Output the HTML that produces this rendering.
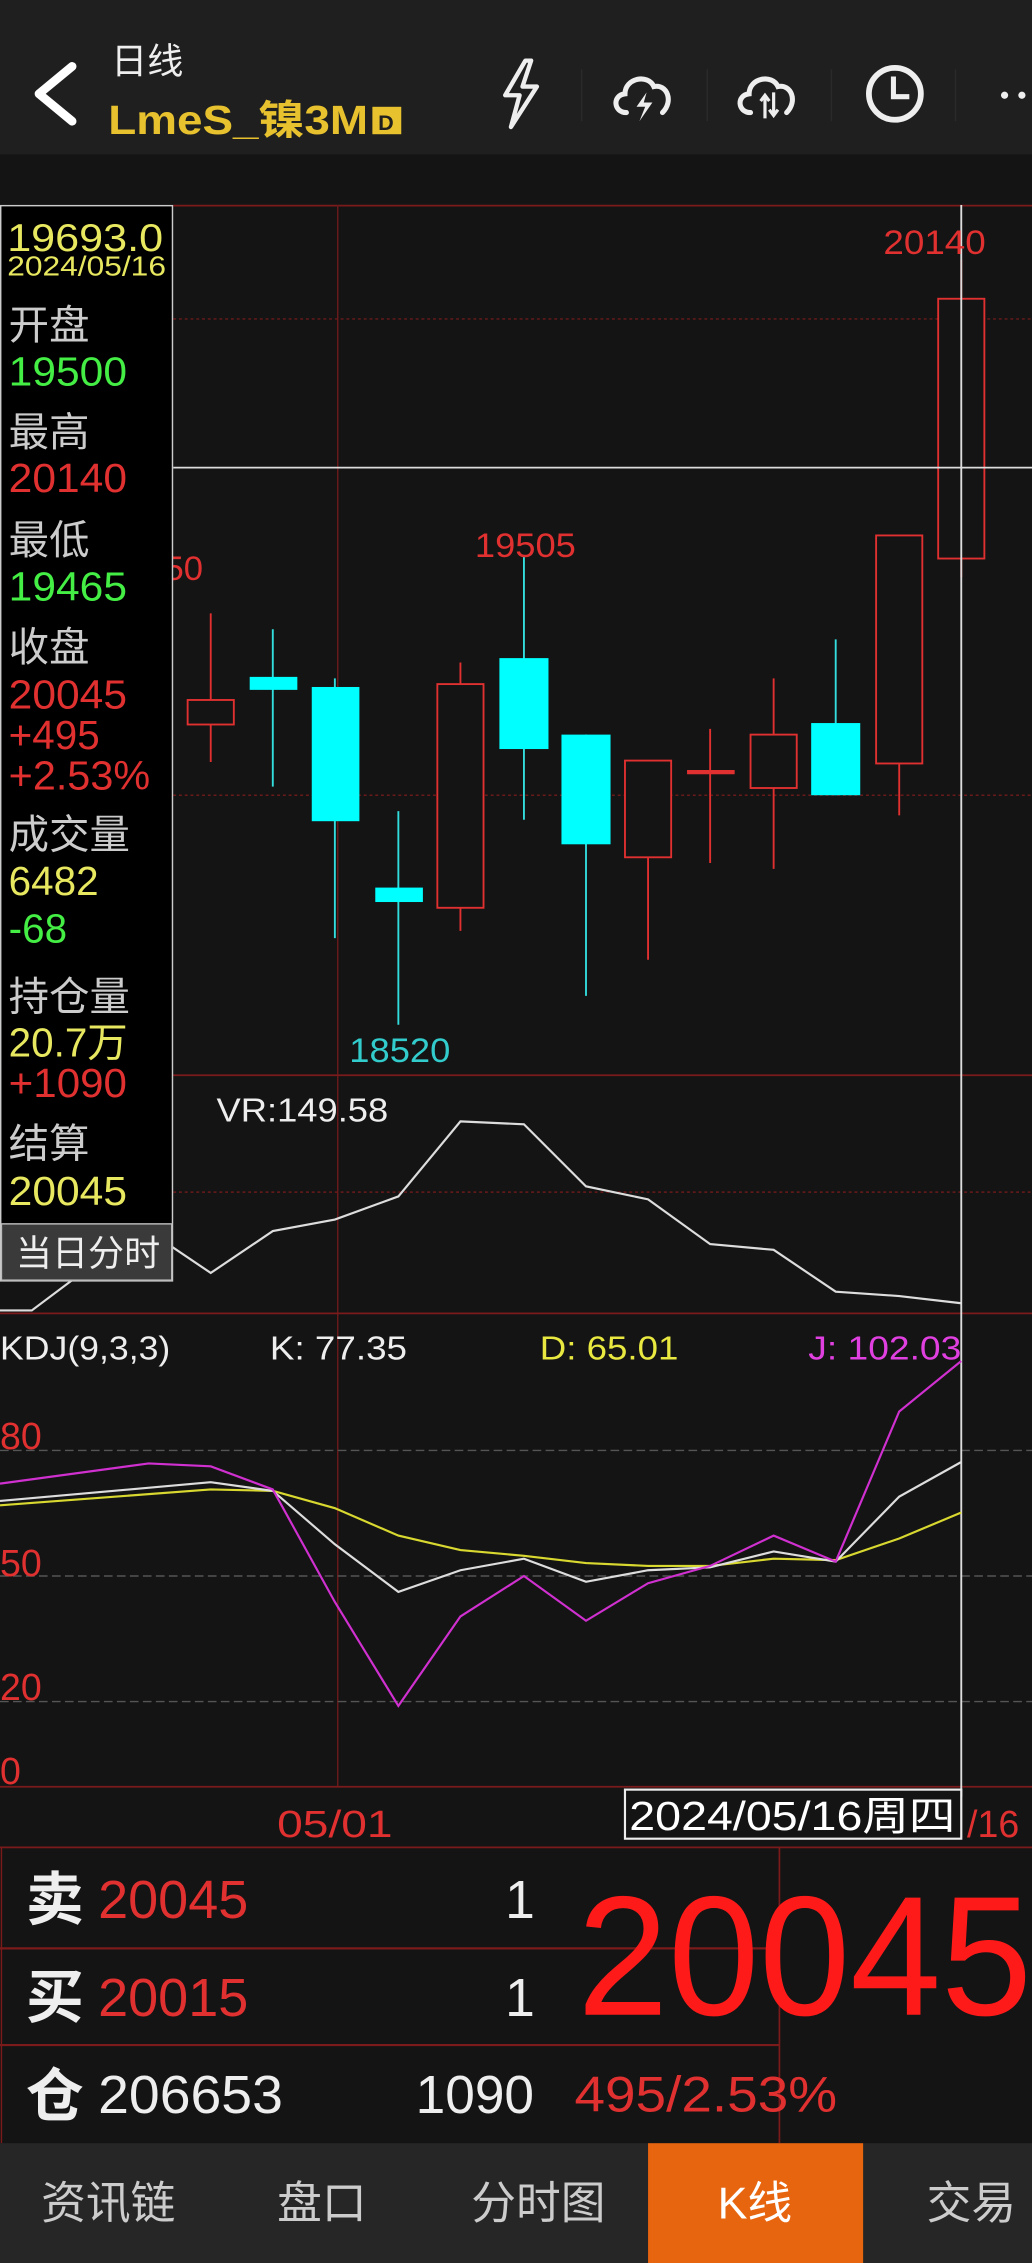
<!DOCTYPE html>
<html><head><meta charset="utf-8"><style>
html,body{margin:0;padding:0;background:#141414;width:1032px;height:2263px;overflow:hidden}
svg{display:block}
text{font-family:"Liberation Sans","Noto Sans CJK SC",sans-serif}
</style></head><body>
<svg width="1032" height="2263" viewBox="0 0 715 1568" preserveAspectRatio="none" xmlns="http://www.w3.org/2000/svg">
<rect x="0" y="0" width="715" height="1568" fill="#141414"/>
<!-- header -->
<rect x="0" y="0" width="715" height="107" fill="#1f1f1f"/>
<path d="M50 46 L27 65 L50 84" stroke="#fff" stroke-width="6" fill="none" stroke-linecap="round" stroke-linejoin="round"/>
<text x="77" y="51" font-size="25" fill="#eee">日线</text>
<text x="75" y="93" font-size="28" font-weight="bold" fill="#e8c22e" textLength="180" lengthAdjust="spacingAndGlyphs">LmeS_镍3M</text>
<rect x="258" y="74" width="20" height="19" fill="#e8c22e"/>
<text x="262" y="90" font-size="15" font-weight="bold" fill="#1f1f1f">D</text>
<path d="M364 42 L350 66 L360 66 L354 88 L372 60 L362 60 L368 42 Z" stroke="#eee" stroke-width="3" fill="none" stroke-linejoin="round"/>
<line x1="403" y1="48" x2="403" y2="84" stroke="#2a2a2a" stroke-width="1"/>
<line x1="490" y1="48" x2="490" y2="84" stroke="#2a2a2a" stroke-width="1"/>
<line x1="576" y1="48" x2="576" y2="84" stroke="#2a2a2a" stroke-width="1"/>
<line x1="662" y1="48" x2="662" y2="84" stroke="#2a2a2a" stroke-width="1"/>
<path d="M434 78 C425 78 424 66 433 65 C433 54 449 51 453 60 C462 58 467 70 459 78" stroke="#eee" stroke-width="3.5" fill="none" stroke-linecap="round"/>
<path d="M448 64 L441 74 L447 74 L443 84 L452 71 L446 71 Z" fill="#eee"/>
<path d="M520 78 C511 78 510 66 519 65 C519 54 535 51 539 60 C548 58 553 70 545 78" stroke="#eee" stroke-width="3.5" fill="none" stroke-linecap="round"/>
<path d="M530 66 L530 82 M536 64 L536 80 M527 70 L530 66 L533 70 M533 76 L536 80 L539 76" stroke="#eee" stroke-width="2.2" fill="none"/>
<circle cx="620" cy="65" r="18" stroke="#eee" stroke-width="4" fill="none"/>
<path d="M619 53 L619 67 L630 67" stroke="#eee" stroke-width="3.5" fill="none"/>
<circle cx="696" cy="66" r="2.5" fill="#eee"/><circle cx="708" cy="66" r="2.5" fill="#eee"/>

<!-- main chart grid -->
<line x1="120" y1="142.5" x2="715" y2="142.5" stroke="#7a1a1a" stroke-width="1.2"/>
<line x1="120" y1="221" x2="715" y2="221" stroke="#6a1a1a" stroke-width="1" stroke-dasharray="2 2"/>
<line x1="120" y1="551" x2="715" y2="551" stroke="#6a1a1a" stroke-width="1" stroke-dasharray="2 2"/>
<line x1="234" y1="142" x2="234" y2="1238" stroke="#6a1a1a" stroke-width="1"/>
<line x1="0" y1="745" x2="715" y2="745" stroke="#7a1a1a" stroke-width="1.2"/>
<line x1="0" y1="826" x2="715" y2="826" stroke="#6a1a1a" stroke-width="1" stroke-dasharray="2 2"/>
<line x1="0" y1="910" x2="715" y2="910" stroke="#7a1a1a" stroke-width="1.2"/>
<line x1="0" y1="1005" x2="715" y2="1005" stroke="#555" stroke-width="1" stroke-dasharray="6 3"/>
<line x1="0" y1="1092" x2="715" y2="1092" stroke="#555" stroke-width="1" stroke-dasharray="6 3"/>
<line x1="0" y1="1179" x2="715" y2="1179" stroke="#555" stroke-width="1" stroke-dasharray="6 3"/>
<line x1="0" y1="1238" x2="715" y2="1238" stroke="#7a1a1a" stroke-width="1.2"/>
<line x1="0" y1="1280" x2="715" y2="1280" stroke="#7a1a1a" stroke-width="1.2"/>

<!-- candles -->
<g stroke-width="1.3">
<line x1="146" y1="425" x2="146" y2="528" stroke="#e03030"/><rect x="130" y="485" width="32" height="17" fill="#141414" stroke="#e03030"/>
<line x1="189" y1="436" x2="189" y2="545" stroke="#33dddd"/><rect x="173" y="469" width="33" height="9" fill="#00ffff" stroke="none"/>
<line x1="232" y1="470" x2="232" y2="650" stroke="#33dddd"/><rect x="216" y="476" width="33" height="93" fill="#00ffff"/>
<line x1="276" y1="562" x2="276" y2="710" stroke="#33dddd"/><rect x="260" y="615" width="33" height="10" fill="#00ffff"/>
<line x1="319" y1="459" x2="319" y2="645" stroke="#e03030"/><rect x="303" y="474" width="32" height="155" fill="#141414" stroke="#e03030"/>
<line x1="363" y1="385" x2="363" y2="568" stroke="#33dddd"/><rect x="346" y="456" width="34" height="63" fill="#00ffff"/>
<line x1="406" y1="509" x2="406" y2="690" stroke="#33dddd"/><rect x="389" y="509" width="34" height="76" fill="#00ffff"/>
<line x1="449" y1="527" x2="449" y2="665" stroke="#e03030"/><rect x="433" y="527" width="32" height="67" fill="#141414" stroke="#e03030"/>
<line x1="492" y1="505" x2="492" y2="598" stroke="#e03030"/><line x1="476" y1="535" x2="509" y2="535" stroke="#e03030" stroke-width="3"/>
<line x1="536" y1="470" x2="536" y2="602" stroke="#e03030"/><rect x="520" y="509" width="32" height="37" fill="#141414" stroke="#e03030"/>
<line x1="579" y1="443" x2="579" y2="551" stroke="#33dddd"/><rect x="562" y="501" width="34" height="50" fill="#00ffff"/>
<line x1="623" y1="371" x2="623" y2="565" stroke="#e03030"/><rect x="607" y="371" width="32" height="158" fill="#141414" stroke="#e03030"/>
<line x1="666" y1="180" x2="666" y2="400" stroke="#e03030"/><rect x="650" y="207" width="32" height="180" fill="#141414" stroke="#e03030"/>
</g>
<line x1="120" y1="324" x2="715" y2="324" stroke="#ddd" stroke-width="1.2"/>
<line x1="666" y1="142" x2="666" y2="1245" stroke="#ddd" stroke-width="1.3"/>
<text x="612" y="176" font-size="24" fill="#e03030" textLength="71" lengthAdjust="spacingAndGlyphs">20140</text>
<text x="329" y="386" font-size="24" fill="#e03030" textLength="70" lengthAdjust="spacingAndGlyphs">19505</text>
<text x="242" y="736" font-size="24" fill="#33cccc" textLength="70" lengthAdjust="spacingAndGlyphs">18520</text>
<text x="114" y="402" font-size="24" fill="#e03030">50</text>

<!-- VR -->
<text x="150" y="777" font-size="23" fill="#eee" textLength="119" lengthAdjust="spacingAndGlyphs">VR:149.58</text>
<polyline points="0,908 22,908 50,887 103,853 146,882 189,853 232,845 276,829 319,777 363,779 406,822 449,831 492,862 536,866 579,895 623,898 666,903" fill="none" stroke="#ddd" stroke-width="1.5"/>

<!-- KDJ -->
<text x="0" y="942" font-size="23" fill="#eee" textLength="118" lengthAdjust="spacingAndGlyphs">KDJ(9,3,3)</text>
<text x="187" y="942" font-size="23" fill="#eee" textLength="95" lengthAdjust="spacingAndGlyphs">K: 77.35</text>
<text x="374" y="942" font-size="23" fill="#e8e840" textLength="96" lengthAdjust="spacingAndGlyphs">D: 65.01</text>
<text x="560" y="942" font-size="23" fill="#e040e0" textLength="106" lengthAdjust="spacingAndGlyphs">J: 102.03</text>
<text x="0" y="1004" font-size="26" fill="#e03030">80</text>
<text x="0" y="1092" font-size="26" fill="#e03030">50</text>
<text x="0" y="1178" font-size="26" fill="#e03030">20</text>
<text x="0" y="1236" font-size="26" fill="#e03030">0</text>
<polyline points="0,1043 146,1032 189,1033 232,1045 276,1064 319,1074 363,1078 406,1083 449,1085 492,1085 536,1080 579,1081 623,1066 666,1048" fill="none" stroke="#d8d830" stroke-width="1.5"/>
<polyline points="0,1040 146,1027 189,1033 232,1070 276,1103 319,1088 363,1080 406,1096 449,1088 492,1086 536,1075 579,1082 623,1037 666,1013" fill="none" stroke="#ddd" stroke-width="1.5"/>
<polyline points="0,1028 103,1014 146,1016 189,1032 232,1110 276,1182 319,1120 363,1092 406,1123 449,1097 492,1085 536,1064 579,1082 623,978 666,943" fill="none" stroke="#d030d0" stroke-width="1.5"/>

<!-- date axis -->
<text x="192" y="1273" font-size="26" fill="#e03030" textLength="80" lengthAdjust="spacingAndGlyphs">05/01</text>
<rect x="433" y="1240" width="233" height="34" fill="#141414" stroke="#eee" stroke-width="1.5"/>
<text x="436" y="1268" font-size="28" fill="#fff" textLength="226" lengthAdjust="spacingAndGlyphs">2024/05/16周四</text>
<text x="670" y="1273" font-size="26" fill="#e03030">/16</text>

<!-- info panel -->
<rect x="0.5" y="142.5" width="119" height="745" fill="#000" stroke="#ccc" stroke-width="1"/>
<text x="5" y="174" font-size="27" fill="#e8e860" textLength="108" lengthAdjust="spacingAndGlyphs">19693.0</text>
<text x="5" y="191" font-size="19" fill="#e8e860" textLength="110" lengthAdjust="spacingAndGlyphs">2024/05/16</text>
<g font-size="28">
<text x="6" y="235" fill="#ccc">开盘</text>
<text x="6" y="267" fill="#44ee44" textLength="82" lengthAdjust="spacingAndGlyphs">19500</text>
<text x="6" y="309" fill="#ccc">最高</text>
<text x="6" y="341" fill="#e03030" textLength="82" lengthAdjust="spacingAndGlyphs">20140</text>
<text x="6" y="384" fill="#ccc">最低</text>
<text x="6" y="416" fill="#44ee44" textLength="82" lengthAdjust="spacingAndGlyphs">19465</text>
<text x="6" y="458" fill="#ccc">收盘</text>
<text x="6" y="491" fill="#e03030" textLength="82" lengthAdjust="spacingAndGlyphs">20045</text>
<text x="6" y="519" fill="#e03030">+495</text>
<text x="6" y="547" fill="#e03030" textLength="98" lengthAdjust="spacingAndGlyphs">+2.53%</text>
<text x="6" y="588" fill="#ccc">成交量</text>
<text x="6" y="620" fill="#e8e860">6482</text>
<text x="6" y="653" fill="#44ee44">-68</text>
<text x="6" y="700" fill="#ccc">持仓量</text>
<text x="6" y="732" fill="#e8e860">20.7万</text>
<text x="6" y="760" fill="#e03030" textLength="82" lengthAdjust="spacingAndGlyphs">+1090</text>
<text x="6" y="802" fill="#ccc">结算</text>
<text x="6" y="835" fill="#e8e860" textLength="82" lengthAdjust="spacingAndGlyphs">20045</text>
</g>
<rect x="1" y="848" width="118" height="39" fill="#3a3a3a" stroke="#bbb" stroke-width="1"/>
<text x="11" y="877" font-size="25" fill="#eee">当日分时</text>

<!-- quote -->
<line x1="0" y1="1350" x2="540" y2="1350" stroke="#7a1a1a" stroke-width="1.5"/>
<line x1="0" y1="1417" x2="540" y2="1417" stroke="#7a1a1a" stroke-width="1.5"/>
<line x1="540" y1="1280" x2="540" y2="1485" stroke="#7a1a1a" stroke-width="1.2"/>
<line x1="1" y1="1280" x2="1" y2="1485" stroke="#7a1a1a" stroke-width="1"/>
<text x="18" y="1330" font-size="40" font-weight="bold" fill="#eee">卖</text>
<text x="68" y="1329" font-size="37" fill="#e03030" textLength="104" lengthAdjust="spacingAndGlyphs">20045</text>
<text x="350" y="1329" font-size="37" fill="#eee">1</text>
<text x="18" y="1398" font-size="40" font-weight="bold" fill="#eee">买</text>
<text x="68" y="1397" font-size="37" fill="#e03030" textLength="104" lengthAdjust="spacingAndGlyphs">20015</text>
<text x="350" y="1397" font-size="37" fill="#eee">1</text>
<text x="18" y="1466" font-size="40" font-weight="bold" fill="#eee">仓</text>
<text x="68" y="1464" font-size="37" fill="#eee" textLength="128" lengthAdjust="spacingAndGlyphs">206653</text>
<text x="288" y="1464" font-size="37" fill="#eee" textLength="82" lengthAdjust="spacingAndGlyphs">1090</text>
<text x="400" y="1396" font-size="118" fill="#ff1a1a" textLength="315" lengthAdjust="spacingAndGlyphs">20045</text>
<text x="398" y="1463" font-size="35" fill="#e03030" textLength="182" lengthAdjust="spacingAndGlyphs">495/2.53%</text>

<!-- tabs -->
<rect x="0" y="1485" width="715" height="83" fill="#262626"/>
<rect x="449" y="1485" width="149" height="83" fill="#e8650f"/>
<g font-size="31" fill="#ccc" text-anchor="middle">
<text x="75" y="1537">资讯链</text>
<text x="223" y="1537">盘口</text>
<text x="373" y="1537">分时图</text>
<text x="523" y="1537" fill="#fff">K线</text>
<text x="673" y="1537">交易</text>
</g>
</svg>
</body></html>
